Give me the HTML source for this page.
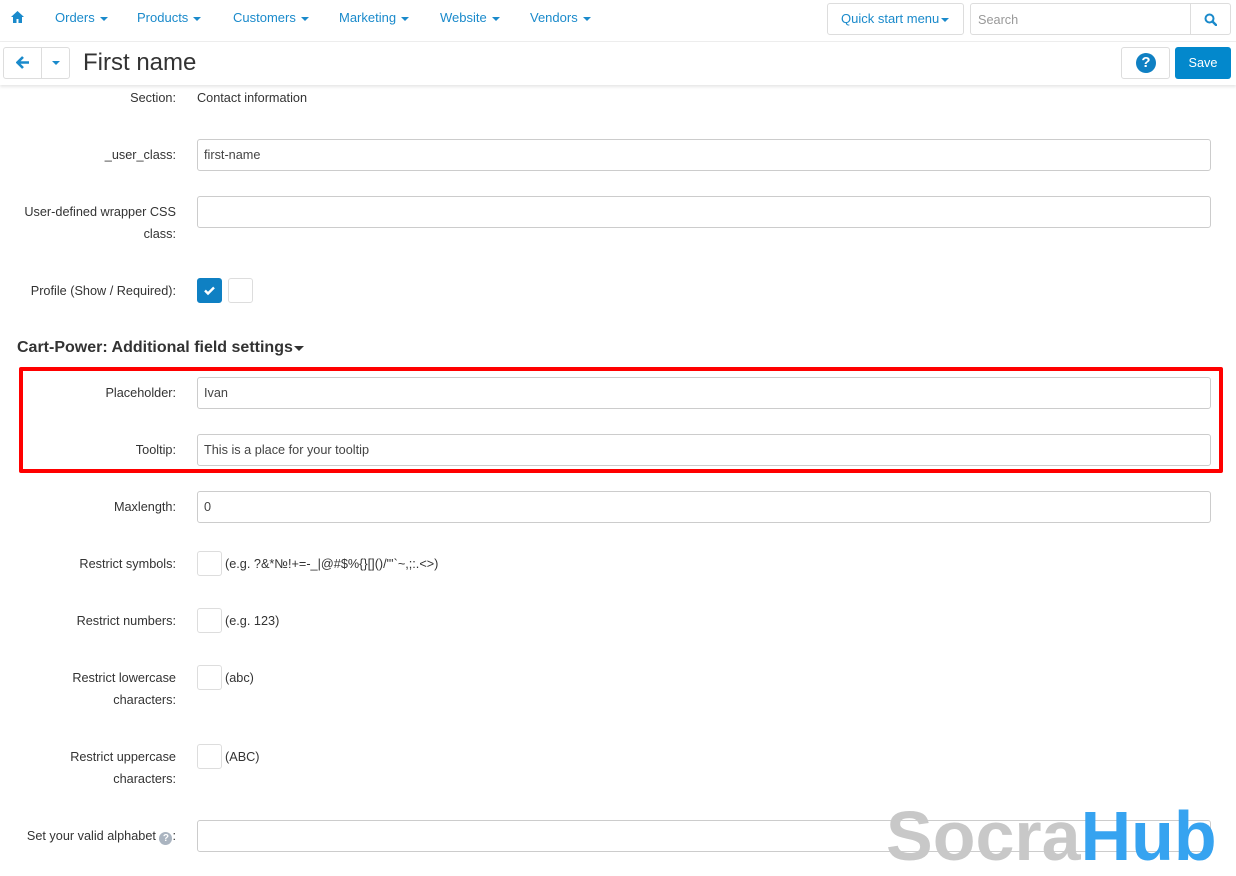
<!DOCTYPE html>
<html><head><meta charset="utf-8"><style>
*{box-sizing:border-box;margin:0;padding:0}
body{width:1236px;height:869px;overflow:hidden;background:#fff;font-family:"Liberation Sans",Arial,sans-serif;font-size:12.7px;color:#333;position:relative}
.a{position:absolute}
.nav{color:#1a8acb;font-size:13px;top:10px}
.car{display:inline-block;width:0;height:0;border-left:4px solid transparent;border-right:4px solid transparent;border-top:4px solid currentColor;vertical-align:middle;margin-left:5px}
.lbl{position:absolute;right:1060px;text-align:right;line-height:22px;white-space:nowrap}
.inp{position:absolute;left:197px;width:1014px;height:32px;border:1px solid #ccc;border-radius:3px;padding:0 6px;line-height:30px;color:#444}
.cb{position:absolute;left:197px;width:25px;height:25px;border:1px solid #ddd;border-radius:3px;background:#fff}
.ht{position:absolute;left:225px;line-height:22px}
</style></head><body>
<div class="a" style="left:0;top:0;width:1236px;height:42px;border-bottom:1px solid #eee"></div>
<svg class="a" style="left:11px;top:11px" width="13" height="12" viewBox="0 0 13 12"><path d="M6.5 0L0 6h2v6h3.5V8h2v4H11V6h2z" fill="#1a8acb"/></svg>
<div class="a nav" style="left:55px">Orders<span class="car"></span></div>
<div class="a nav" style="left:137px">Products<span class="car"></span></div>
<div class="a nav" style="left:233px">Customers<span class="car"></span></div>
<div class="a nav" style="left:339px">Marketing<span class="car"></span></div>
<div class="a nav" style="left:440px">Website<span class="car"></span></div>
<div class="a nav" style="left:530px">Vendors<span class="car"></span></div>
<div class="a" style="left:827px;top:3px;width:137px;height:32px;border:1px solid #ddd;border-radius:3px;color:#1a8acb;line-height:30px;padding-left:13px;font-size:13px">Quick start menu<span class="car" style="margin-left:2px"></span></div>
<div class="a" style="left:970px;top:3px;width:261px;height:32px;border:1px solid #ddd;border-radius:3px;color:#999;line-height:32px;padding-left:7px">Search</div>
<div class="a" style="left:1190px;top:4px;width:1px;height:30px;background:#ddd"></div>
<svg class="a" style="left:1204px;top:13px" width="13" height="13" viewBox="0 0 13 13"><circle cx="5.5" cy="5.5" r="4" fill="none" stroke="#1a8acb" stroke-width="2"/><path d="M8.5 8.5L12 12" stroke="#1a8acb" stroke-width="2.4" stroke-linecap="round"/></svg>
<div class="a" style="left:0;top:42px;width:1236px;height:43px;box-shadow:0 2px 3px rgba(0,0,0,.1);background:#fff"></div>
<div class="a" style="left:3px;top:47px;width:67px;height:32px;border:1px solid #ddd;border-radius:3px"></div>
<div class="a" style="left:41px;top:48px;width:1px;height:30px;background:#ddd"></div>
<svg class="a" style="left:16px;top:56px" width="14" height="13" viewBox="0 0 14 13"><path d="M7 1L1.5 6.5 7 12M2 6.5h11" fill="none" stroke="#1a8acb" stroke-width="2.6"/></svg>
<div class="a" style="left:52px;top:61px;border-left:4px solid transparent;border-right:4px solid transparent;border-top:4px solid #1a8acb"></div>
<div class="a" style="left:83px;top:49px;font-size:24px;color:#333">First name</div>
<div class="a" style="left:1121px;top:47px;width:49px;height:32px;border:1px solid #ddd;border-radius:3px"></div>
<div class="a" style="left:1136px;top:53px;width:20px;height:20px;border-radius:50%;background:#0f80c3;color:#fff;font-weight:bold;font-size:15px;text-align:center;line-height:20px">?</div>
<div class="a" style="left:1175px;top:47px;width:56px;height:32px;background:#0388cc;border-radius:3px;color:#fff;text-align:center;line-height:32px">Save</div>

<div class="lbl" style="top:87px">Section:</div>
<div class="a" style="left:197px;top:87px;line-height:22px">Contact information</div>
<div class="lbl" style="top:144px">_user_class:</div>
<div class="inp" style="top:139px">first-name</div>
<div class="lbl" style="top:201px">User-defined wrapper CSS<br>class:</div>
<div class="inp" style="top:196px"></div>
<div class="lbl" style="top:280px">Profile (Show / Required):</div>
<div class="cb" style="top:278px;background:#0f80c3;border-color:#0f80c3"></div>
<svg class="a" style="left:203px;top:285px" width="13" height="11" viewBox="0 0 13 11"><path d="M2 5.5l3 3 6-6" fill="none" stroke="#fff" stroke-width="2.4"/></svg>
<div class="cb" style="left:228px;top:278px"></div>
<div class="a" style="left:17px;top:337px;font-size:16px;font-weight:bold;color:#333;line-height:22px">Cart-Power: Additional field settings</div>
<div class="a" style="left:294px;top:346px;border-left:5px solid transparent;border-right:5px solid transparent;border-top:5px solid #333"></div>
<div class="a" style="left:19px;top:367px;width:1204px;height:106px;border:4px solid #f00;border-radius:2px"></div>
<div class="lbl" style="top:382px">Placeholder:</div>
<div class="inp" style="top:377px">Ivan</div>
<div class="lbl" style="top:439px">Tooltip:</div>
<div class="inp" style="top:434px">This is a place for your tooltip</div>
<div class="lbl" style="top:496px">Maxlength:</div>
<div class="inp" style="top:491px">0</div>
<div class="lbl" style="top:553px">Restrict symbols:</div>
<div class="cb" style="top:551px"></div>
<div class="ht" style="top:553px">(e.g. ?&amp;*№!+=-_|@#$%{}[]()/"'`~,;:.&lt;&gt;)</div>
<div class="lbl" style="top:610px">Restrict numbers:</div>
<div class="cb" style="top:608px"></div>
<div class="ht" style="top:610px">(e.g. 123)</div>
<div class="lbl" style="top:667px">Restrict lowercase<br>characters:</div>
<div class="cb" style="top:665px"></div>
<div class="ht" style="top:667px">(abc)</div>
<div class="lbl" style="top:746px">Restrict uppercase<br>characters:</div>
<div class="cb" style="top:744px"></div>
<div class="ht" style="top:746px">(ABC)</div>
<div class="lbl" style="top:825px">Set your valid alphabet <span style="display:inline-block;width:13px;height:13px;border-radius:50%;background:#aab4c0;color:#fff;font-size:10px;font-weight:bold;text-align:center;line-height:13px;vertical-align:-1px">?</span>:</div>
<div class="inp" style="top:820px"></div>
<div class="a" style="left:886px;top:796px;font-size:70px;font-weight:bold;letter-spacing:0;line-height:80px;white-space:nowrap"><span style="color:#c8c8c8">Socra</span><span style="color:#36a3f0">Hub</span></div>
</body></html>
